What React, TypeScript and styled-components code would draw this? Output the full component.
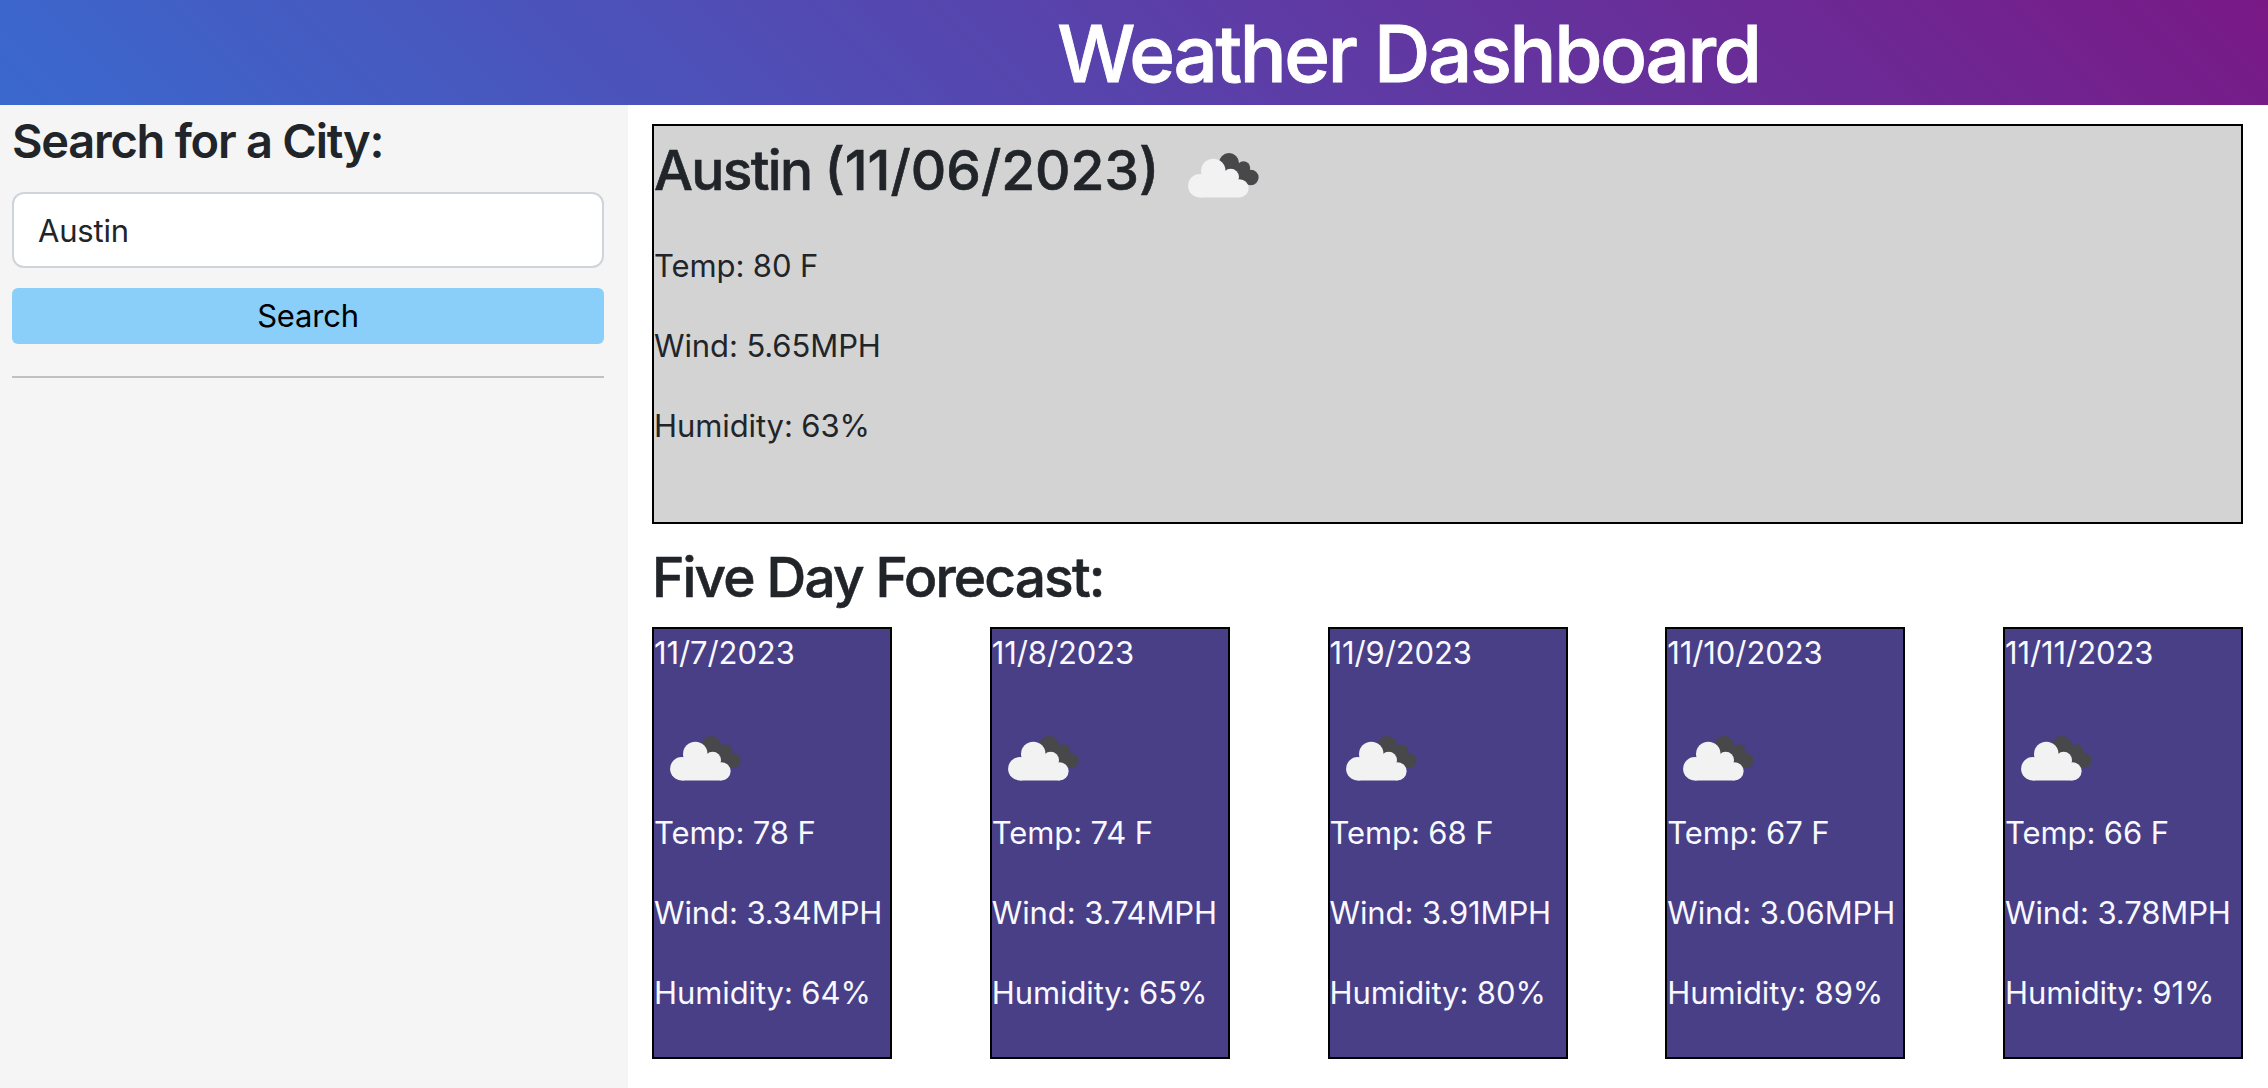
import React from 'react';
import styled, { createGlobalStyle } from 'styled-components';

const GlobalStyle = createGlobalStyle`
  *, *::before, *::after { box-sizing: border-box; }
  body {
    margin: 0;
    background: #fff;
    color: #212529;
    font-family: Inter, "Liberation Sans", sans-serif;
    font-size: 32px;
    line-height: 48px;
  }
  h1, h2, h3, p { margin: 0; }
`;

const Page = styled.div`
  display: flex;
  flex-direction: column;
  height: 1088px;
  overflow: hidden;
`;

const Header = styled.header`
  flex: none;
  display: flex;
  justify-content: center;
  height: 105px;
  padding: 6px 0 0 549px;
  background: linear-gradient(45deg, #3a69ce, #791986);
`;

const Title = styled.h1`
  color: #fff;
  font-size: 78px;
  font-weight: 500;
  line-height: 96px;
  letter-spacing: -2.35px;
  -webkit-text-stroke: 0.9px currentColor;
  white-space: nowrap;
`;

const Columns = styled.div`
  flex: 1;
  display: flex;
  min-height: 0;
`;

const Sidebar = styled.aside`
  flex: none;
  width: 628px;
  padding: 7px 24px 0 12px;
  background: #f5f5f5;
`;

const SidebarTitle = styled.h3`
  font-size: 47px;
  font-weight: 600;
  line-height: 58px;
  letter-spacing: -1.25px;
  white-space: nowrap;
`;

const CityInput = styled.input`
  display: block;
  width: 100%;
  height: 76px;
  margin: 22px 0 20px;
  padding: 0 24px;
  border: 2px solid #ced4da;
  border-radius: 12px;
  background: #fff;
  color: #212529;
  font: inherit;
  font-size: 31px;
  letter-spacing: -0.2px;
`;

const SearchButton = styled.button`
  display: block;
  width: 100%;
  height: 56px;
  padding: 0;
  border: 0;
  border-radius: 6px;
  background: #8acff9;
  color: #000;
  font: inherit;
  font-size: 31px;
  letter-spacing: -0.2px;
`;

const Divider = styled.hr`
  height: 2px;
  margin: 32px 0 0;
  border: 0;
  background: #c0c0c0;
`;

const Main = styled.main`
  flex: 1;
  min-width: 0;
  padding: 19px 25px 0 24px;
`;

const Current = styled.section`
  height: 400px;
  border: 2px solid #000;
  background: #d3d3d3;
`;

const CurrentHead = styled.div`
  display: flex;
  align-items: flex-start;
  height: 116px;
`;

const Heading = styled.h2`
  font-size: 55px;
  font-weight: 500;
  line-height: 67px;
  -webkit-text-stroke: 0.6px currentColor;
  white-space: nowrap;
`;

const CityHeading = styled(Heading)`
  padding-top: 11px;
`;

const CityName = styled.span`
  letter-spacing: -1.65px;
`;

const SectionHeading = styled(Heading)`
  margin: 20px 0 16px;
  letter-spacing: -1.85px;
`;

const Reading = styled.p`
  height: 48px;
  margin-bottom: 32px;
  font-size: 31px;
  letter-spacing: -0.1px;
  white-space: nowrap;
`;

const Forecast = styled.section`
  display: flex;
  justify-content: space-between;
`;

const Day = styled.article`
  width: 240px;
  height: 432px;
  border: 2px solid #000;
  background: #483f87;
  color: #f8f8ff;
`;

const CloudSvg = styled.svg<{ $top: number; $left: number; $bottom?: number }>`
  display: block;
  flex: none;
  margin: ${(p) => `${p.$top}px 0 ${p.$bottom ?? 0}px ${p.$left}px`};
`;

function Clouds(props: { top: number; left: number; bottom?: number }) {
  return (
    <CloudSvg $top={props.top} $left={props.left} $bottom={props.bottom} width="72" height="46" viewBox="0 0 72 46">
      <g fill="#48484a">
        <circle cx="41" cy="10" r="10" />
        <circle cx="55.5" cy="15" r="6.7" />
        <circle cx="62.8" cy="24.5" r="7.8" />
        <path d="M36 17 L46 7 L57 14 L62 30 L46 26 Z" />
      </g>
      <g fill="#f2f2f2">
        <circle cx="11.8" cy="32.7" r="11.7" />
        <circle cx="25.3" cy="18" r="12.3" />
        <circle cx="42.7" cy="24" r="8.3" />
        <circle cx="51.5" cy="35.3" r="9.1" />
        <path d="M11.8 44.4 L14 20 L37 18 L48 28 L51.5 44.4 Z" />
      </g>
    </CloudSvg>
  );
}

const days = [
  { date: '11/7/2023', temp: 78, wind: '3.34', humidity: 64 },
  { date: '11/8/2023', temp: 74, wind: '3.74', humidity: 65 },
  { date: '11/9/2023', temp: 68, wind: '3.91', humidity: 80 },
  { date: '11/10/2023', temp: 67, wind: '3.06', humidity: 89 },
  { date: '11/11/2023', temp: 66, wind: '3.78', humidity: 91 },
];

export default function App() {
  return (
    <Page>
      <GlobalStyle />
      <Header>
        <Title>Weather Dashboard</Title>
      </Header>
      <Columns>
        <Sidebar>
          <SidebarTitle>Search for a City:</SidebarTitle>
          <CityInput defaultValue="Austin" />
          <SearchButton>Search</SearchButton>
          <Divider />
        </Sidebar>
        <Main>
          <Current>
            <CurrentHead>
              <CityHeading>
                <CityName>Austin </CityName>(11/06/2023)
              </CityHeading>
              <Clouds top={27} left={29} />
            </CurrentHead>
            <Reading>Temp: 80 F</Reading>
            <Reading>Wind: 5.65MPH</Reading>
            <Reading>Humidity: 63%</Reading>
          </Current>
          <SectionHeading>Five Day Forecast:</SectionHeading>
          <Forecast>
            {days.map((d) => (
              <Day key={d.date}>
                <Reading>{d.date}</Reading>
                <Clouds top={59} left={16} bottom={27} />
                <Reading>Temp: {d.temp} F</Reading>
                <Reading>Wind: {d.wind}MPH</Reading>
                <Reading>Humidity: {d.humidity}%</Reading>
              </Day>
            ))}
          </Forecast>
        </Main>
      </Columns>
    </Page>
  );
}
